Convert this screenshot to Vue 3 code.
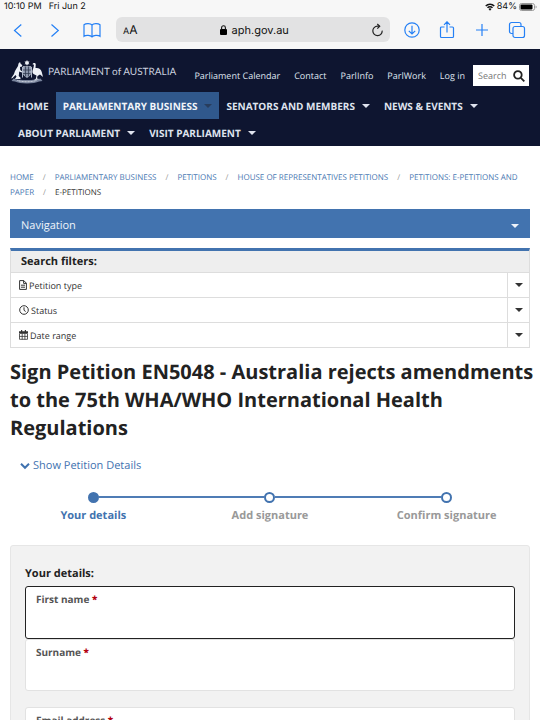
<script setup>
import { ref } from 'vue'

const links = ['Parliament Calendar', 'Contact', 'ParlInfo', 'ParlWork', 'Log in']
const menu = [
  { label: 'HOME' },
  { label: 'PARLIAMENTARY BUSINESS', sub: true, active: true },
  { label: 'SENATORS AND MEMBERS', sub: true },
  { label: 'NEWS & EVENTS', sub: true },
  { label: 'ABOUT PARLIAMENT', sub: true },
  { label: 'VISIT PARLIAMENT', sub: true },
]
const crumbs = [
  'HOME',
  'PARLIAMENTARY BUSINESS',
  'PETITIONS',
  'HOUSE OF REPRESENTATIVES PETITIONS',
  'PETITIONS: E-PETITIONS AND PAPER',
]
const filters = [
  { label: 'Petition type', icon: 'file' },
  { label: 'Status', icon: 'clock' },
  { label: 'Date range', icon: 'calendar' },
]
const steps = ['Your details', 'Add signature', 'Confirm signature']
const current = ref(0)
const form = ref({ first: '', last: '', email: '' })
</script>

<template>
  <div class="screen">
    <div class="chrome">
      <div class="status">
        <span>10:10 PM</span>
        <span>Fri Jun 2</span>
        <span class="power">
          <svg width="10" height="8" viewBox="0 0 20 15" fill="none" stroke="#111" stroke-width="3">
            <path d="M1.5 5.5a12 12 0 0 1 17 0M5 9.2a7 7 0 0 1 10 0" />
            <path d="M7 11.7a4.2 4.2 0 0 1 6 0L10 15z" fill="#111" stroke="none" />
          </svg>
          <span>84%</span>
          <svg width="18" height="8" viewBox="0 0 18 8">
            <rect x=".5" y=".5" width="15" height="7" rx="2" fill="none" stroke="#999" />
            <rect x="1.5" y="1.5" width="12" height="5" rx="1" fill="#000" />
            <path d="M16.6 2.5c1.4.5 1.4 2.5 0 3z" fill="#999" />
          </svg>
        </span>
      </div>
      <div class="toolbar">
        <div class="tools history">
          <button class="tool" aria-label="Back">
            <svg width="18" height="18" viewBox="0 0 18 18"><path d="M12.300 3.500 5.500 9.500l6.800 6" /></svg>
          </button>
          <button class="tool" aria-label="Forward">
            <svg width="18" height="18" viewBox="0 0 18 18"><path d="m5.500 3.500 6.800 6-6.800 6" /></svg>
          </button>
          <button class="tool" aria-label="Bookmarks">
            <svg width="18" height="18" viewBox="0 0 18 18"><path d="M9 4C7.500 2.200 3 2 1 3.700v11.600c2-1.500 6.500-1.200 8 .7 1.500-1.900 6-2.200 8-.7V3.700C15 2 10.500 2.200 9 4zm0 0v12" /></svg>
          </button>
        </div>
        <div class="address">
          <button class="text-size" aria-label="Text size"><small>A</small>A</button>
          <span class="host">
            <svg width="7" height="10" viewBox="0 0 7 10"><rect y="4" width="7" height="6" rx="1" /><path d="M1.600 4.500V2.700a1.900 1.900 0 0 1 3.800 0v1.800" fill="none" stroke="#111" stroke-width="1.100" /></svg>
            aph.gov.au
          </span>
          <button class="reload" aria-label="Reload">
            <svg width="13" height="14" viewBox="0 0 13 14" fill="none" stroke="#222" stroke-width="1.200"><path d="M11.200 7.600A4.700 4.700 0 1 1 6.500 3.200h2" /><path d="M6.300 1 8.700 3.200 6.300 5.600" /></svg>
          </button>
        </div>
        <div class="tools">
          <button class="tool" aria-label="Downloads">
            <svg width="18" height="18" viewBox="0 0 18 18"><circle cx="9" cy="9" r="7.200" /><path d="M9 4.800v8M5.800 9.800 9 13l3.200-3.200" /></svg>
          </button>
          <button class="tool" aria-label="Share">
            <svg width="18" height="18" viewBox="0 0 18 18"><path d="M6.500 6h-3a1 1 0 0 0-1 1v8.500a1 1 0 0 0 1 1h11a1 1 0 0 0 1-1V7a1 1 0 0 0-1-1h-3M9 11.500V.8M6 3.800l3-3 3 3" /></svg>
          </button>
          <button class="tool" aria-label="New tab">
            <svg width="18" height="18" viewBox="0 0 18 18"><path d="M9 3v12M3 9h12" /></svg>
          </button>
          <button class="tool" aria-label="Tabs">
            <svg width="18" height="18" viewBox="0 0 18 18"><rect x="5" y="5.500" width="11.500" height="11" rx="2" /><path d="M5 12.500H3.500a2 2 0 0 1-2-2v-7a2 2 0 0 1 2-2h7.500a2 2 0 0 1 2 2v2" /></svg>
          </button>
        </div>
      </div>
    </div>

    <main class="page">
      <header class="masthead">
        <div class="top">
          <a class="brand" href="#">
            <svg width="32" height="24" viewBox="0 0 64 48" fill="#eef1f7">
              <path d="m32 0 1.600 3.200L37 3l-2 2.800 2 2.900-3.400-.3L32 11.500l-1.600-3.100-3.400.3 2-2.900L27 3l3.400.2z" />
              <path d="M24 13h16v11c0 6-4 9-8 11-4-2-8-5-8-11z" fill="#8993aa" stroke="#dfe4ee" />
              <path d="M24 20h16M24 27h15M29 13v20M35 13v20" stroke="#30394f" stroke-width="1.500" />
              <path d="m18 4 1.500 4 3 2-.5 3-4 1 .5 6 4 3-1 2-5-2-1 9 4 4-1 2H8l3-5-2-3-6 6-3 1 6-9c2-8 6-12 8-16l1-5z" />
              <path d="M43 8.500c1-3 6-4 6.500 0L49 16c6-1 11 2 12.500 8L64 34l-6-5-5 3-1 5 4 1v2H46l4-3 1-6-6-3c-4-4-1-9 0-13l1-5.500z" />
              <path d="M5 37c8 4 46 4 54 0l4 5-7 1c-9 5-39 5-48 0l-7-1z" fill="#78839c" />
              <path d="M13 41q19 5 38 0" fill="none" stroke="#e6eaf2" stroke-width="2" stroke-dasharray="2 1" />
              <path d="M23 14v21M41 14v21" stroke="#acb5c7" stroke-width="2" />
            </svg>
            <span>PARLIAMENT of AUSTRALIA</span>
          </a>
          <nav class="links"><a v-for="l in links" :key="l" href="#">{{ l }}</a></nav>
          <form class="search" @submit.prevent>
            <input type="text" placeholder="Search" aria-label="Search" />
            <button aria-label="Submit search">
              <svg width="12" height="12" viewBox="0 0 12 12" fill="none" stroke="#222" stroke-width="1.800"><circle cx="4.900" cy="4.900" r="3.800" /><path d="m7.800 7.800 3.500 3.500" /></svg>
            </button>
          </form>
        </div>
        <nav class="menu">
          <a v-for="m in menu" :key="m.label" href="#" :class="{ active: m.active }">
            {{ m.label }}<i v-if="m.sub" class="caret"></i>
          </a>
        </nav>
      </header>

      <div class="content">
        <nav class="crumbs" aria-label="Breadcrumb">
          <template v-for="c in crumbs" :key="c"><a href="#">{{ c }}</a><span class="slash">/</span></template><span>E-PETITIONS</span>
        </nav>

        <button class="section-nav">Navigation<i class="caret"></i></button>

        <section class="filters">
          <h2>Search filters:</h2>
          <button v-for="f in filters" :key="f.label" class="filter">
            <span class="name">
              <svg v-if="f.icon === 'file'" width="8" height="10" viewBox="0 0 8 10" fill="none" stroke="#333"><path d="M.6.6h4.200l2.600 2.600v6.200H.6zM4.600.6v2.800h2.800M2 5.200h4M2 7.200h4" /></svg>
              <svg v-else-if="f.icon === 'clock'" width="10" height="10" viewBox="0 0 10 10" fill="none" stroke="#333"><circle cx="5" cy="5" r="4.300" /><path d="M5 2.300v3l1.700 1.200" /></svg>
              <svg v-else width="9" height="10" viewBox="0 0 9 10" fill="#333"><path d="M2 0h1.200v1.200h2.600V0H7v1.200h2V3H0V1.200h2z" /><path d="M.5 3.500h8v5.800h-8zM.5 6.400h8M3.200 3.500v6M5.900 3.500v6" fill="none" stroke="#333" stroke-width=".8" /></svg>
              {{ f.label }}
            </span>
            <span class="toggle"><i class="caret"></i></span>
          </button>
        </section>

        <h1>Sign Petition EN5048 - Australia rejects amendments to the 75th WHA/WHO International Health Regulations</h1>

        <a class="details" href="#">
          <svg width="10" height="10" viewBox="0 0 10 10" fill="none" stroke="#3f72af" stroke-width="2"><path d="m1 2.800 4 4 4-4" /></svg>
          Show Petition Details
        </a>

        <ol class="steps">
          <li v-for="(s, i) in steps" :key="s" :class="{ current: i === current }">
            <span class="dot"></span>{{ s }}
          </li>
        </ol>

        <form class="panel" @submit.prevent>
          <h2>Your details:</h2>
          <div class="field focused">
            <label for="first">First name <b>*</b></label>
            <input id="first" v-model="form.first" type="text" required />
          </div>
          <div class="field">
            <label for="last">Surname <b>*</b></label>
            <input id="last" v-model="form.last" type="text" required />
          </div>
          <div class="field separate">
            <label for="email">Email address <b>*</b></label>
            <input id="email" v-model="form.email" type="email" required />
          </div>
        </form>
      </div>
    </main>
  </div>
</template>

<style>
body {
  margin: 0;
  background: #fff;
}
</style>

<style scoped>
* {
  box-sizing: border-box;
}
.screen {
  display: flex;
  flex-direction: column;
  height: 100vh;
  font-family: "Open Sans", "Noto Sans", sans-serif;
  text-rendering: geometricPrecision;
  color: #222;
}
a {
  color: inherit;
  text-decoration: none;
}
button,
input {
  border: 0;
  padding: 0;
  margin: 0;
  background: none;
  font: inherit;
  color: inherit;
  text-rendering: inherit;
  outline: none;
  appearance: none;
}
svg {
  flex: none;
}
.chrome {
  flex: none;
  background: #f7f7f7;
  font-family: Inter, sans-serif;
  color: #111;
  padding-bottom: 7px;
}
.status {
  display: flex;
  align-items: center;
  gap: 7px;
  height: 14px;
  padding: 0 3px 0 4px;
  font-size: 9px;
  line-height: 14px;
}
.status > span {
  white-space: nowrap;
}
.power {
  display: flex;
  align-items: center;
  gap: 2px;
  margin-left: auto;
}
.toolbar {
  display: flex;
  align-items: center;
  gap: 13px;
  padding: 3px 14px 0 9px;
}
.tools {
  display: flex;
  gap: 17px;
}
.history {
  gap: 19px;
  padding-right: 2px;
}
.tool {
  display: flex;
}
.tool svg {
  fill: none;
  stroke: #2580f5;
  stroke-width: 1.2;
}
.address {
  flex: 1;
  display: flex;
  align-items: center;
  justify-content: space-between;
  height: 25px;
  padding: 0 6px 0 7px;
  border-radius: 6px;
  background: #e2e2e3;
  font-size: 12px;
}
.text-size small {
  font-size: 9px;
}
.host {
  display: flex;
  align-items: center;
  gap: 5px;
  font-size: 11px;
}
.reload {
  display: flex;
}
.page {
  flex: 1;
  min-height: 0;
  overflow: hidden auto;
  scrollbar-width: none;
}
.masthead {
  background: #0e1530;
  color: #dfe3ee;
}
.top {
  display: flex;
  align-items: center;
  justify-content: space-between;
  padding: 10px 11px 0;
  height: 43px;
}
.brand {
  display: flex;
  align-items: center;
  align-self: flex-start;
  gap: 5px;
  padding-top: 1px;
  font-family: Lato, sans-serif;
  font-size: 10px;
  color: #c9cfdf;
  white-space: nowrap;
}
.links {
  display: flex;
  gap: 14px;
  margin-left: auto;
  margin-right: 8px;
  font-size: 9px;
  white-space: nowrap;
}
.search {
  display: flex;
  align-items: center;
  width: 56px;
  height: 21px;
  padding: 0 4px 0 5px;
  background: #fff;
  font-size: 9px;
}
.search input {
  flex: 1;
  min-width: 0;
  width: 0;
}
.search input::placeholder {
  color: #777;
}
.search button {
  display: flex;
}
.menu {
  display: flex;
  flex-wrap: wrap;
  padding: 0 11px;
  font-size: 10px;
  font-weight: 700;
}
.menu a {
  display: flex;
  align-items: center;
  gap: 7px;
  height: 27px;
  padding: 0 7px;
  white-space: nowrap;
}
.menu .active {
  background: #30588c;
  color: #f2f5fa;
}
.menu .active .caret {
  color: #283d5d;
}
.caret {
  width: 0;
  height: 0;
  border: 4px solid transparent;
  border-top-color: currentColor;
  border-bottom: 0;
}
.content {
  padding: 24px 10px 0;
}
.crumbs {
  font-size: 8px;
  line-height: 15px;
  color: #333;
}
.crumbs a {
  color: #4a78b2;
}
.slash {
  margin: 0 9px;
  color: #999;
}
.section-nav {
  display: flex;
  align-items: center;
  justify-content: space-between;
  width: 100%;
  height: 29px;
  margin-top: 9px;
  padding: 4px 11px 0;
  background: #4273af;
  color: #eef3fa;
  font-size: 11px;
}
.filters {
  margin-top: 10px;
  border: 1px solid #ddd;
  border-top: 3px solid #4273af;
}
.filters h2 {
  margin: 0;
  padding: 0 10px;
  background: #eee;
  font-size: 11px;
  line-height: 21px;
}
.filter {
  display: flex;
  width: 100%;
  height: 25px;
  border-top: 1px solid #ddd;
  font-size: 9px;
  color: #333;
}
.name {
  flex: 1;
  display: flex;
  align-items: center;
  gap: 2px;
  padding-left: 8px;
}
.toggle {
  display: flex;
  align-items: center;
  justify-content: center;
  width: 22px;
  height: 100%;
  border-left: 1px solid #ddd;
}
h1 {
  margin: 10px -8px 0 0;
  font-size: 20px;
  line-height: 28px;
}
.details {
  display: flex;
  align-items: center;
  gap: 3px;
  margin: 16px 0 0 10px;
  font-size: 11px;
  line-height: 16px;
  color: #3f72af;
}
.steps {
  display: grid;
  grid-template-columns: repeat(3, 1fr);
  list-style: none;
  margin: 18px -5px 0;
  padding: 0;
  font-size: 11px;
  font-weight: 700;
  line-height: 16px;
  color: #999;
}
.steps li {
  display: flex;
  flex-direction: column;
  align-items: center;
  gap: 5px;
  position: relative;
}
.steps li + li::before {
  content: "";
  position: absolute;
  top: 4px;
  right: calc(50% + 5px);
  width: calc(100% - 10px);
  height: 2px;
  background: #4f7cb5;
}
.dot {
  width: 11px;
  height: 11px;
  border: 2px solid #4273af;
  border-radius: 50%;
  background: #fff;
}
.steps .current {
  color: #4273af;
}
.current .dot {
  background: #4273af;
}
.panel {
  margin-top: 21px;
  padding: 20px 14px 14px;
  border: 1px solid #e6e6e6;
  border-radius: 3px;
  background: #f2f2f2;
}
.panel h2 {
  margin: 0 0 4px;
  font-size: 11px;
  line-height: 16px;
}
.field {
  display: flex;
  flex-direction: column;
  height: 52px;
  padding: 4px 10px;
  border: 1px solid #e2e2e2;
  border-radius: 3px;
  background: #fff;
}
.focused {
  height: 53px;
  border-color: #222;
}
.separate {
  margin-top: 16px;
}
.field label {
  font-size: 10px;
  font-weight: 700;
  line-height: 16px;
  color: #555;
}
.field b {
  color: #b3000f;
}
.field input {
  flex: 1;
  min-height: 0;
  font-size: 11px;
}
</style>
